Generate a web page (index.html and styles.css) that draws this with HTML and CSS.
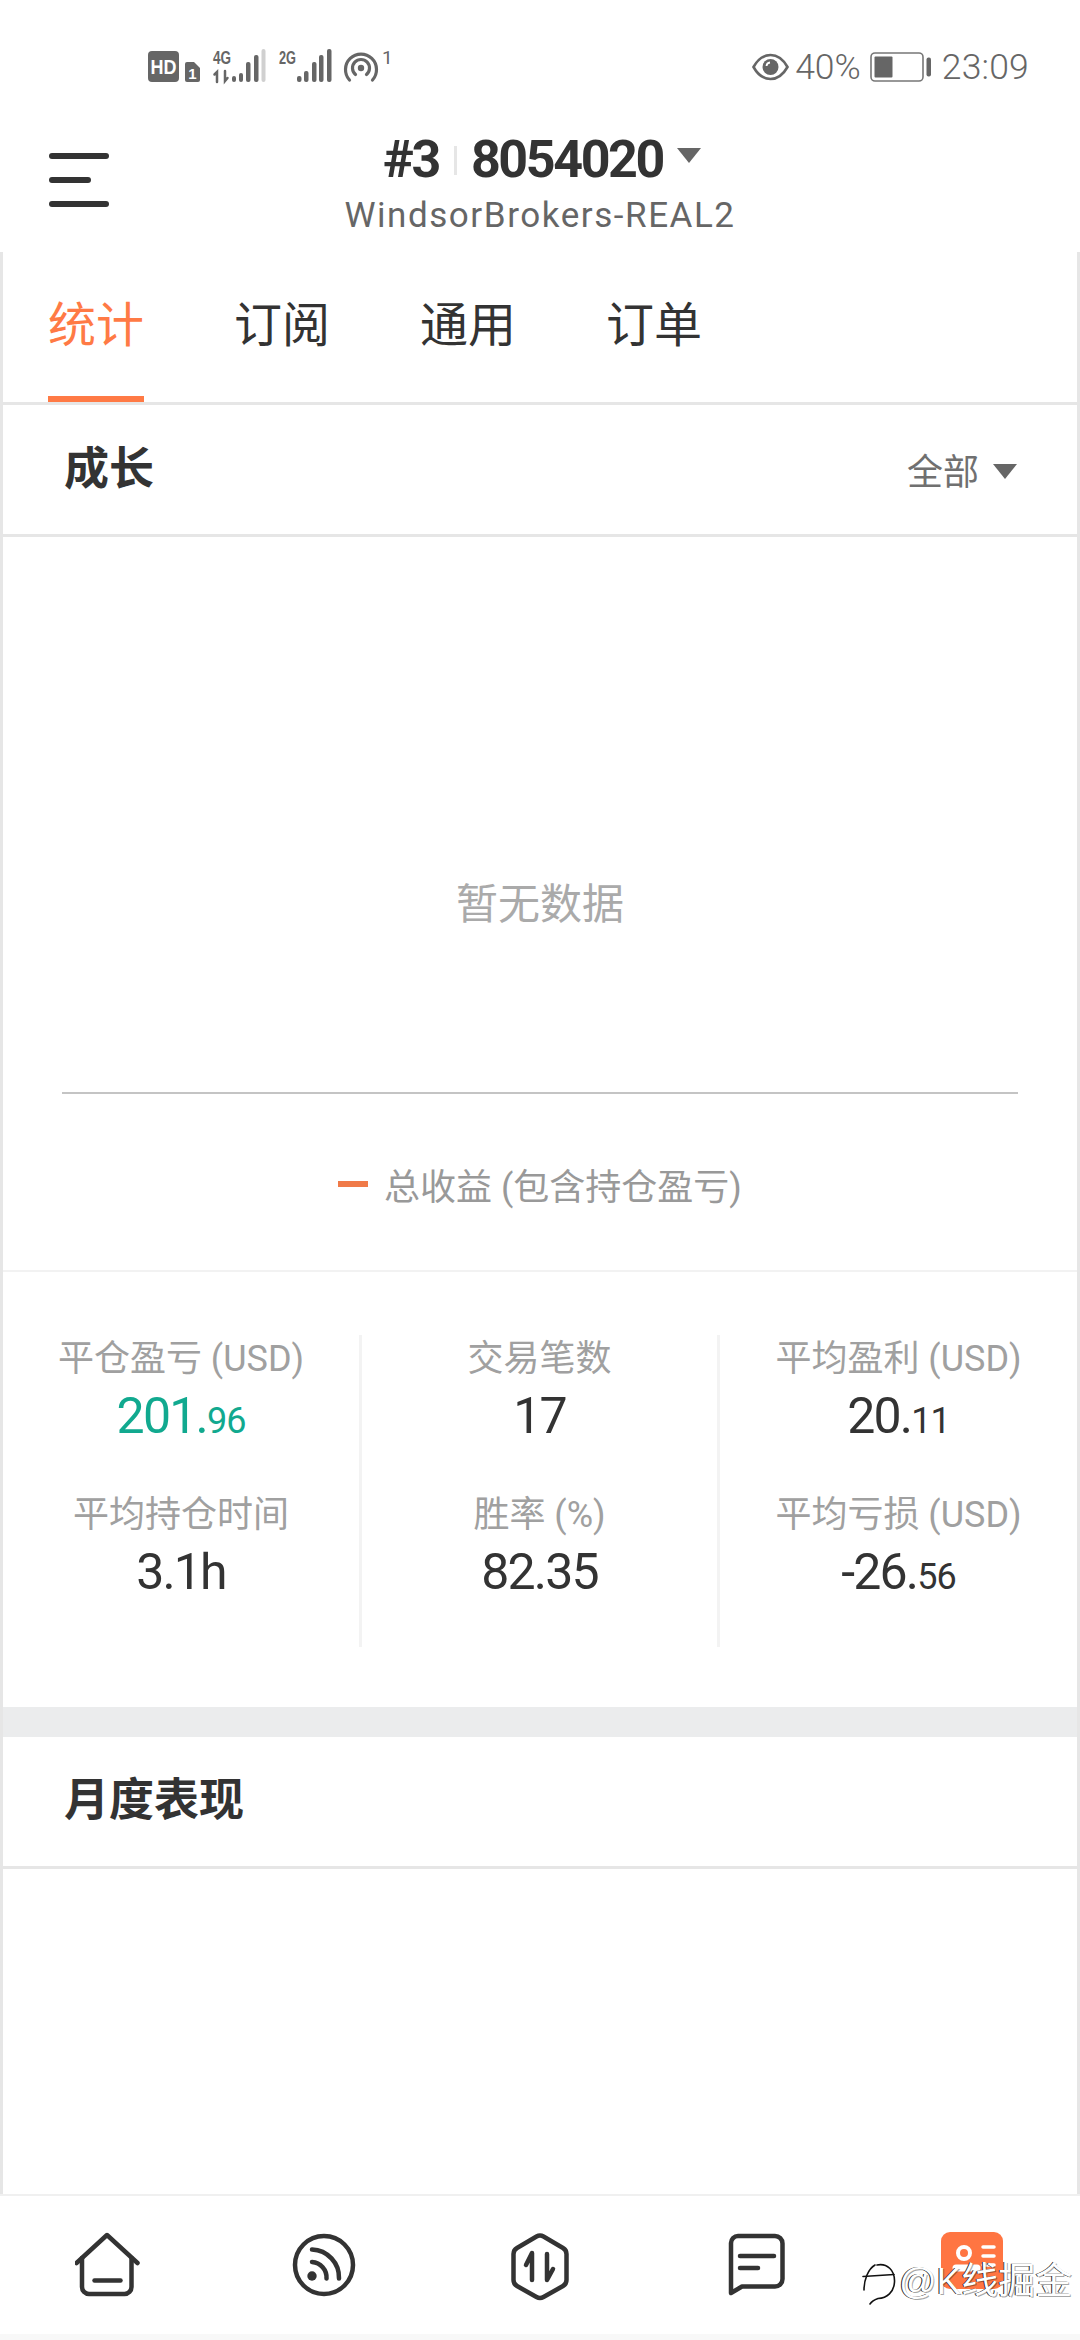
FILE: index.html
```html
<!DOCTYPE html>
<html lang="zh">
<head>
<meta charset="utf-8">
<title>统计</title>
<link rel="stylesheet" href="styles.css">
</head>
<body>
<div class="page">
  <div class="statusbar">
    <svg class="st-left" width="252" height="44" viewBox="148 44 252 44">
      <rect x="148" y="51" width="31" height="31" rx="4" fill="#666"/>
      <text class="st-hd" x="150.500" y="74" textLength="26" lengthAdjust="spacingAndGlyphs">HD</text>
      <path d="M187 62h7l6 6v12a2 2 0 0 1-2 2h-11a2 2 0 0 1-2-2V64a2 2 0 0 1 2-2z" fill="#666"/>
      <text class="st-sim" x="192.500" y="79" text-anchor="middle">1</text>
      <text class="st-net" x="213" y="64" textLength="18" lengthAdjust="spacingAndGlyphs">4G</text>
      <path d="M217 82V72l-2.500 2.500M225 71v10l2.500-3" fill="none" stroke="#666" stroke-width="2.500" stroke-linecap="round"/>
      <g fill="#666">
        <rect x="232" y="76" width="4" height="6" rx="2"/>
        <rect x="239" y="73" width="4" height="9" rx="2"/>
        <rect x="246" y="62" width="4.500" height="20" rx="2"/>
        <rect x="254" y="55" width="4.500" height="27" rx="2"/>
      </g>
      <rect x="261.500" y="49" width="4" height="33" rx="2" fill="#d0d0d0"/>
      <text class="st-net" x="279" y="64" textLength="17" lengthAdjust="spacingAndGlyphs">2G</text>
      <g fill="#666">
        <rect x="297" y="76" width="4.500" height="6" rx="2"/>
        <rect x="304" y="71" width="4.500" height="11" rx="2"/>
        <rect x="312" y="62" width="4.500" height="20" rx="2"/>
        <rect x="319" y="55" width="4.500" height="27" rx="2"/>
        <rect x="327" y="49" width="4.500" height="33" rx="2"/>
      </g>
      <path d="M349.500 80A15.500 15.500 0 1 1 372.500 80M355.500 74.500A8.500 8.500 0 1 1 366.500 74.500" fill="none" stroke="#666" stroke-width="3.200" stroke-linecap="round"/>
      <circle cx="361" cy="68" r="3.200" fill="#666"/>
      <text class="st-one" x="382" y="64">1</text>
    </svg>
    <div class="st-right">
      <svg class="st-eye" width="37" height="28" viewBox="0 0 37 28">
        <path d="M1.500 14C6 6 12 2 18.500 2S31 6 35.500 14C31 22 25 26 18.500 26S6 22 1.500 14z" fill="none" stroke="#666" stroke-width="2.600"/>
        <circle cx="18.500" cy="14" r="8" fill="#666"/>
        <path d="M14.500 13a4 4 0 0 1 3.500-3.500" fill="none" stroke="#fff" stroke-width="1.800"/>
      </svg>
      <span class="st-pct">40%</span>
      <svg class="st-batt" width="62" height="30" viewBox="0 0 62 30">
        <rect x="1" y="1" width="52" height="28" rx="4" fill="none" stroke="#777" stroke-width="1.600"/>
        <rect x="4.500" y="4.500" width="18" height="21" rx="1" fill="#666"/>
        <rect x="56.500" y="5.500" width="4.500" height="19" rx="2" fill="#666"/>
      </svg>
      <span class="st-time">23:09</span>
    </div>
  </div>

  <header class="topbar">
    <div class="burger"><i class="bar"></i><i class="bar bar-short"></i><i class="bar"></i></div>
    <div class="account">
      <div class="acct-line">
        <span class="acct-num">#3</span><i class="acct-sep"></i><span class="acct-num">8054020</span><i class="caret caret-top"></i>
      </div>
      <div class="acct-server">WindsorBrokers-REAL2</div>
    </div>
  </header>

  <main class="content">
    <nav class="tabs">
      <span class="tab tab-active">统计</span>
      <span class="tab">订阅</span>
      <span class="tab">通用</span>
      <span class="tab">订单</span>
    </nav>

    <section class="sec-head">
      <h2 class="sec-title">成长</h2>
      <div class="filter"><span>全部</span><i class="caret caret-filter"></i></div>
    </section>

    <section class="chart">
      <div class="plot"><span class="nodata">暂无数据</span></div>
      <div class="legend"><i class="legend-dash"></i><span>总收益 (包含持仓盈亏)</span></div>
    </section>

    <section class="stats">
      <div class="stat-col">
        <div class="stat"><div class="stat-label">平仓盈亏 (USD)</div><div class="stat-value green">201.<small>96</small></div></div>
        <div class="stat"><div class="stat-label">平均持仓时间</div><div class="stat-value">3.1h</div></div>
      </div>
      <div class="stat-col">
        <div class="stat"><div class="stat-label">交易笔数</div><div class="stat-value">17</div></div>
        <div class="stat"><div class="stat-label">胜率 (%)</div><div class="stat-value">82.35</div></div>
      </div>
      <div class="stat-col">
        <div class="stat"><div class="stat-label">平均盈利 (USD)</div><div class="stat-value">20.<small>11</small></div></div>
        <div class="stat"><div class="stat-label">平均亏损 (USD)</div><div class="stat-value">-26.<small>56</small></div></div>
      </div>
    </section>

    <div class="band"></div>

    <section class="sec-head sec-head-month">
      <h2 class="sec-title">月度表现</h2>
    </section>

    <div class="empty"></div>
  </main>

  <footer class="bottomnav">
    <div class="nav-item">
      <svg width="66" height="66" viewBox="1.500 0 66 66" fill="none" stroke="#333" stroke-width="4.500" stroke-linecap="round" stroke-linejoin="round">
        <path d="M3 31L33.500 3L64 31"/>
        <path d="M8.500 26V55a7 7 0 0 0 7 7H51a7 7 0 0 0 7-7V26"/>
        <path d="M21 48.500H47"/>
      </svg>
    </div>
    <div class="nav-item">
      <svg width="66" height="66" viewBox="0 0 66 66" fill="none" stroke="#333" stroke-width="4.500" stroke-linecap="round">
        <circle cx="33" cy="33" r="29"/>
        <path d="M21 30A15.500 15.500 0 0 1 35.500 46.500"/>
        <path d="M21 17.500A28 28 0 0 1 48 46.500"/>
        <circle cx="21" cy="44" r="4.700" fill="#333" stroke="none"/>
      </svg>
    </div>
    <div class="nav-item">
      <svg width="66" height="70" viewBox="7 5 66 70" fill="none" stroke="#333" stroke-width="4.500" stroke-linecap="round" stroke-linejoin="round">
        <path d="M36.500 9.500Q40 7.500 43.500 9.500L63 21Q66.500 23 66.500 27V53Q66.500 57 63 59L43.500 70Q40 72 36.500 70L17 59Q13.500 57 13.500 53V27Q13.500 23 17 21z"/>
        <path d="M32 53V26L26 38"/>
        <path d="M47 27V53L53 42"/>
      </svg>
    </div>
    <div class="nav-item">
      <svg width="60" height="64" viewBox="-1 0 60 64" fill="none" stroke="#333" stroke-width="4.500" stroke-linecap="round" stroke-linejoin="round">
        <path d="M11 4H48a7.500 7.500 0 0 1 7.500 7.500V47a7.500 7.500 0 0 1-7.500 7.500H15L4 61V11a7 7 0 0 1 7-7z"/>
        <path d="M13 24H47"/>
        <path d="M13 36H31"/>
      </svg>
    </div>
    <div class="nav-item">
      <svg class="nav-me" width="62" height="57" viewBox="0 0 62 57">
        <rect width="62" height="57" rx="9" fill="#ff7542"/>
        <circle cx="23" cy="21" r="6" fill="none" stroke="#fff" stroke-width="4"/>
        <path d="M15 36H36" fill="none" stroke="#fff" stroke-width="7" stroke-linecap="round"/>
        <path d="M42 15H53M42 24H53M42 33H53" fill="none" stroke="#fff" stroke-width="3.500" stroke-linecap="round"/>
      </svg>
    </div>
    <div class="watermark">
      <svg class="wm-logo" width="36" height="46" viewBox="0 0 36 46" fill="none" stroke="#111" stroke-width="1.600" stroke-linecap="round">
        <path d="M3 30C3 20 7 9 14 5"/>
        <path d="M2 16.500L33 14.500"/>
        <path d="M16 5C26 3 34 10 33.500 22C33 32 26 38 17 38.500C13 40 11 41 9 44"/>
      </svg>
      <span class="wm-text">@K线掘金</span>
    </div>
  </footer>
  <div class="navstrip"></div>
</div>
</body>
</html>
```

FILE: styles.css
```css
* { box-sizing: border-box; }
html, body { margin: 0; padding: 0; background: #fff; }
body { font-family: Roboto, "Noto Sans CJK SC", sans-serif; color: #333; }
i { display: block; }
.page { width: 1080px; height: 2340px; display: flex; flex-direction: column; overflow: hidden; }

.statusbar { height: 88px; flex: none; padding: 44px 51px 0 148px; display: flex; justify-content: space-between; align-items: flex-start; color: #666; }
.st-left { display: block; }
.st-hd { font: 700 21px "Liberation Sans", sans-serif; fill: #fff; }
.st-sim { font: 700 15px "Liberation Sans", sans-serif; fill: #fff; }
.st-net { font: 700 18px "Liberation Sans", sans-serif; fill: #666; }
.st-one { font: 400 19px Roboto, sans-serif; fill: #666; }
.st-right { display: flex; align-items: center; height: 46px; font-size: 35.500px; font-weight: 300; }
.st-pct { margin-left: 6px; }
.st-batt { margin-left: 9px; }
.st-time { margin-left: 10px; letter-spacing: 0.200px; }

.topbar { height: 164px; flex: none; position: relative; display: flex; justify-content: center; padding-top: 45px; }
.burger { position: absolute; left: 49px; top: 65px; width: 60px; display: flex; flex-direction: column; gap: 18px; }
.bar { height: 6px; border-radius: 3px; background: #333; width: 60px; }
.bar-short { width: 42px; }
.account { display: flex; flex-direction: column; align-items: center; }
.acct-line { display: flex; align-items: center; height: 54px; padding-left: 4px; color: #333; }
.acct-num { font-size: 52px; font-weight: 700; letter-spacing: -2.400px; line-height: 54px; }
.acct-sep { width: 3px; height: 29px; background: #e6e6e6; margin: 0 14px 0 15px; }
.caret { width: 0; height: 0; border-style: solid; border-color: #666 transparent transparent; }
.caret-top { border-width: 15px 12px 0; margin-left: 14px; margin-top: -10px; }
.acct-server { font-size: 35px; line-height: 40px; color: #666; letter-spacing: 1.550px; margin-top: 9px; }

.content { flex: none; height: 1942px; border-left: 3px solid #e6e6e6; border-right: 3px solid #e6e6e6; display: flex; flex-direction: column; }

.tabs { height: 153px; flex: none; border-bottom: 3px solid #e6e6e6; padding-left: 45px; display: flex; gap: 90px; }
.tab { width: 96px; height: 150px; font-size: 48px; line-height: 48px; padding-top: 50px; color: #333; }
.tab-active { color: #ff7a45; border-bottom: 6px solid #ff7a45; }

.sec-head { height: 132px; flex: none; border-bottom: 3px solid #e6e6e6; padding: 0 60px 0 61px; display: flex; justify-content: space-between; align-items: center; }
.sec-title { margin: 0; font-size: 45px; font-weight: 700; line-height: 60px; color: #333; }
.sec-head-month { padding-bottom: 2px; }
.filter { display: flex; align-items: center; font-size: 36px; color: #707070; padding-bottom: 2px; }
.caret-filter { border-width: 15px 12px 0; margin-left: 14px; margin-top: 6px; }

.chart { height: 735px; flex: none; border-bottom: 2px solid #f2f2f2; display: flex; flex-direction: column; }
.plot { height: 557px; flex: none; margin: 0 59px; border-bottom: 2px solid #c4c4c4; padding-top: 343px; text-align: center; }
.nodata { font-size: 42px; line-height: 50px; color: #aaa; }
.legend { flex: 1; display: flex; align-items: center; justify-content: center; gap: 16px; font-size: 36px; color: #999; padding-top: 4px; }
.legend-dash { width: 30px; height: 6px; background: #f07a48; }

.stats { height: 435px; flex: none; padding-top: 63px; display: grid; grid-template-columns: 356px 358px 360px; align-items: start; }
.stat-col { height: 312px; padding-top: 1px; display: flex; flex-direction: column; gap: 36px; }
.stat-col + .stat-col { border-left: 3px solid #f3f3f3; }
.stat { height: 120px; text-align: center; }
.stat-label { font-size: 36px; line-height: 46px; color: #a0a0a0; }
.stat-value { font-size: 50px; font-weight: 400; line-height: 64px; margin-top: 2px; color: #333; letter-spacing: -1.800px; }
.stat-value small { font-size: 36px; letter-spacing: -1px; }
.green { color: #11a98f; }

.band { height: 30px; flex: none; background: #ebeced; }
.empty { flex: 1; }

.bottomnav { flex: none; height: 140px; position: relative; display: grid; grid-template-columns: repeat(5, 216px); align-items: start; border-top: 2px solid #f0f0f0; background: #fff; padding-top: 36px; }
.nav-item { display: flex; justify-content: center; }
.nav-item svg { display: block; }
.watermark { position: absolute; left: 861px; top: 64px; display: flex; align-items: flex-start; gap: 2px; }
.wm-text { font-family: "Liberation Sans", "Noto Sans CJK SC", sans-serif; font-size: 37px; line-height: 44px; color: #fff; text-shadow: -1px 0 0 #222, 1px 1px 0 rgba(0,0,0,.35); }
.navstrip { flex: none; height: 6px; background: #f8f8f8; }
```
